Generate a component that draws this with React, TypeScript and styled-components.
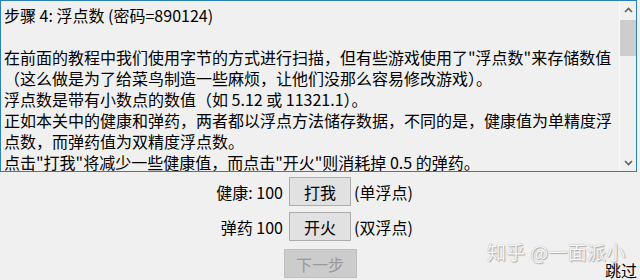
import React from "react";
import styled, { createGlobalStyle } from "styled-components";

const Global = createGlobalStyle`
  html, body { margin: 0; padding: 0; background: #f0f0f0; }
  body { font-family: "Noto Sans CJK SC", "Noto Sans", sans-serif; color: #000; }
`;

const Page = styled.div`
  position: relative;
  width: 640px;
  height: 280px;
  overflow: hidden;
  background: #f0f0f0;
`;

const TextBox = styled.div`
  box-sizing: border-box;
  width: 637px;
  height: 172px;
  border: 1px solid #2a80b9;
  display: flex;
  background: #f0f0f0;
  overflow: hidden;
`;

const TextContent = styled.div`
  flex: 1;
  padding: 4px 0 0 3px;
  font-size: 16px;
  line-height: 21px;
  white-space: pre;
  overflow: hidden;
`;

const ScrollBar = styled.div`
  width: 16px;
  display: flex;
  flex-direction: column;
  border-left: 1px solid #fafafa;
  background: #f0f0f0;
`;

const ArrowBtn = styled.div`
  height: 17px;
  display: flex;
  align-items: center;
  justify-content: center;
`;

const Track = styled.div`
  flex: 1;
  padding: 2px 0 0;
`;

const Thumb = styled.div`
  height: 36px;
  background: #cdcdcd;
`;

const Controls = styled.div`
  display: flex;
  flex-direction: column;
  padding-top: 5px;
  gap: 6px;
`;

const FieldRow = styled.div`
  display: grid;
  grid-template-columns: 1fr 62px 1fr;
  height: 29px;
  align-items: center;
  font-size: 16px;
`;

const Label = styled.span`
  text-align: right;
  padding-right: 6px;
`;

const Note = styled.span`
  padding-left: 3px;
`;

const Button = styled.div<{ $disabled?: boolean }>`
  box-sizing: border-box;
  height: 29px;
  display: flex;
  align-items: center;
  justify-content: center;
  font-size: 16px;
  background: ${(p) => (p.$disabled ? "#cccccc" : "#e1e1e1")};
  border: 1px solid ${(p) => (p.$disabled ? "#bfbfbf" : "#adadad")};
  color: ${(p) => (p.$disabled ? "#9a9a9a" : "#000")};
`;

const FooterRow = styled.div`
  display: grid;
  grid-template-columns: 1fr 73px 1fr;
  margin-top: 2px;
  height: 29px;
`;

const Skip = styled.span`
  grid-column: 3;
  justify-self: end;
  align-self: end;
  font-size: 16px;
  line-height: 18px;
  margin-right: 3px;
  margin-bottom: -1px;
`;

const Watermark = styled.div`
  position: absolute;
  left: 487px;
  top: 238px;
  font-size: 19px;
  color: #f7f7f7;
  letter-spacing: 0.3px;
  text-shadow: 0 0 1px #9a9a9a, 1px 1px 1px #b0b0b0;
  pointer-events: none;
`;

const Chevron = ({ up }: { up?: boolean }) => (
  <svg width="9" height="6" viewBox="0 0 9 6">
    <path
      d={up ? "M1 5 L4.5 1.5 L8 5" : "M1 1 L4.5 4.5 L8 1"}
      fill="none"
      stroke="#606060"
      strokeWidth="1.6"
    />
  </svg>
);

const text = [
  "步骤 4: 浮点数 (密码=890124)",
  "",
  "在前面的教程中我们使用字节的方式进行扫描，但有些游戏使用了\"浮点数\"来存储数值",
  "（这么做是为了给菜鸟制造一些麻烦，让他们没那么容易修改游戏）。",
  "浮点数是带有小数点的数值（如 5.12 或 11321.1）。",
  "正如本关中的健康和弹药，两者都以浮点方法储存数据，不同的是，健康值为单精度浮",
  "点数，而弹药值为双精度浮点数。",
  "点击\"打我\"将减少一些健康值，而点击\"开火\"则消耗掉 0.5 的弹药。",
].join("\n");

export default function App() {
  return (
    <>
      <Global />
      <Page>
        <TextBox>
          <TextContent>{text}</TextContent>
          <ScrollBar>
            <ArrowBtn>
              <Chevron up />
            </ArrowBtn>
            <Track>
              <Thumb />
            </Track>
            <ArrowBtn>
              <Chevron />
            </ArrowBtn>
          </ScrollBar>
        </TextBox>
        <Controls>
          <FieldRow>
            <Label>健康: 100</Label>
            <Button>打我</Button>
            <Note>(单浮点)</Note>
          </FieldRow>
          <FieldRow>
            <Label>弹药 100</Label>
            <Button>开火</Button>
            <Note>(双浮点)</Note>
          </FieldRow>
          <FooterRow>
            <span />
            <Button $disabled>下一步</Button>
            <Skip>跳过</Skip>
          </FooterRow>
        </Controls>
        <Watermark>知乎 @一面派小</Watermark>
      </Page>
    </>
  );
}
